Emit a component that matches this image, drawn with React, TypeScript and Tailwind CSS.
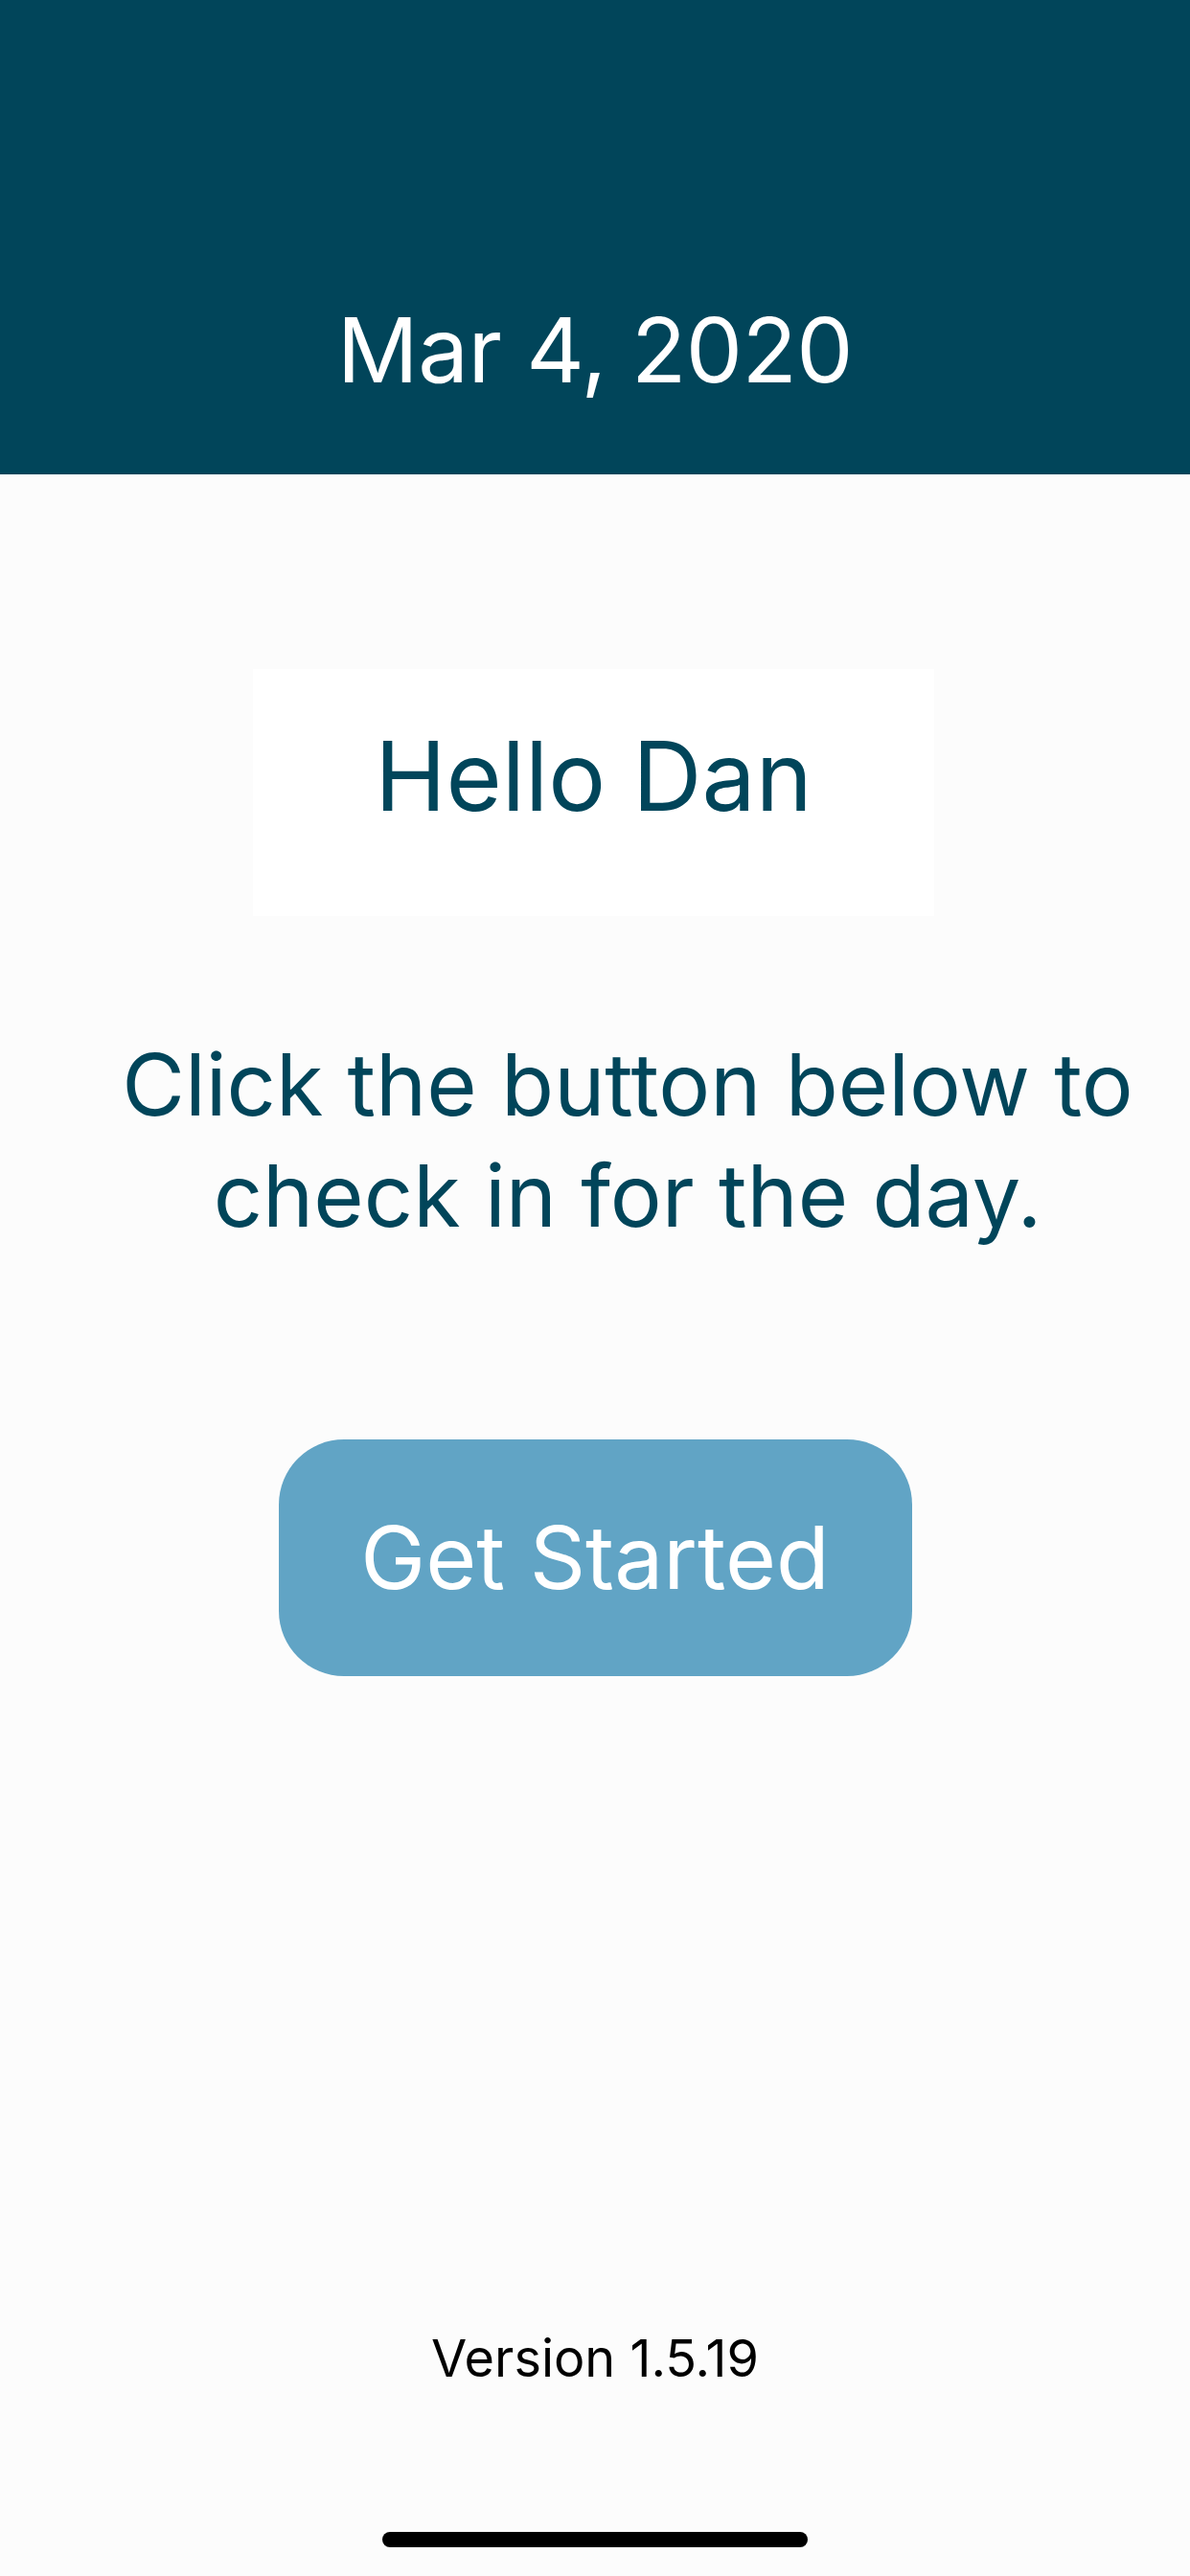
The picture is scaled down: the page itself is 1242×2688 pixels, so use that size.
import React from "react";

export default function App() {
  const font = { fontFamily: "Inter, 'Noto Sans', sans-serif" };

  return (
    <div className="w-[1242px] h-[2688px] bg-[#fcfcfc] flex flex-col items-center overflow-hidden" style={font}>
      {/* header band with the date */}
      <div className="w-full h-[495px] bg-[#01455a] flex flex-col items-center pt-[318px]">
        <div className="text-white text-[94px] leading-none tracking-[-0.5px]">Mar 4, 2020</div>
      </div>

      {/* greeting card */}
      <div className="mt-[203px] mr-[3px] w-[711px] h-[258px] bg-white flex justify-center pt-[62px]">
        <div className="text-[#01455a] text-[100px] leading-none">Hello Dan</div>
      </div>

      <div className="mt-[118px] pl-[68px] text-[#01455a] text-[90px] leading-[116px] text-center">
        Click the button below to
        <br />
        check in for the day.
      </div>

      <button className="mt-[196px] w-[661px] h-[247px] rounded-[68px] bg-[#61a4c5] flex items-center justify-center text-white text-[91px] leading-none">
        Get Started
      </button>

      <div className="mt-[685px] text-black text-[54px] leading-none">Version 1.5.19</div>

      {/* home indicator */}
      <div className="mt-[154px] w-[444px] h-[16px] rounded-full bg-black" />
    </div>
  );
}
